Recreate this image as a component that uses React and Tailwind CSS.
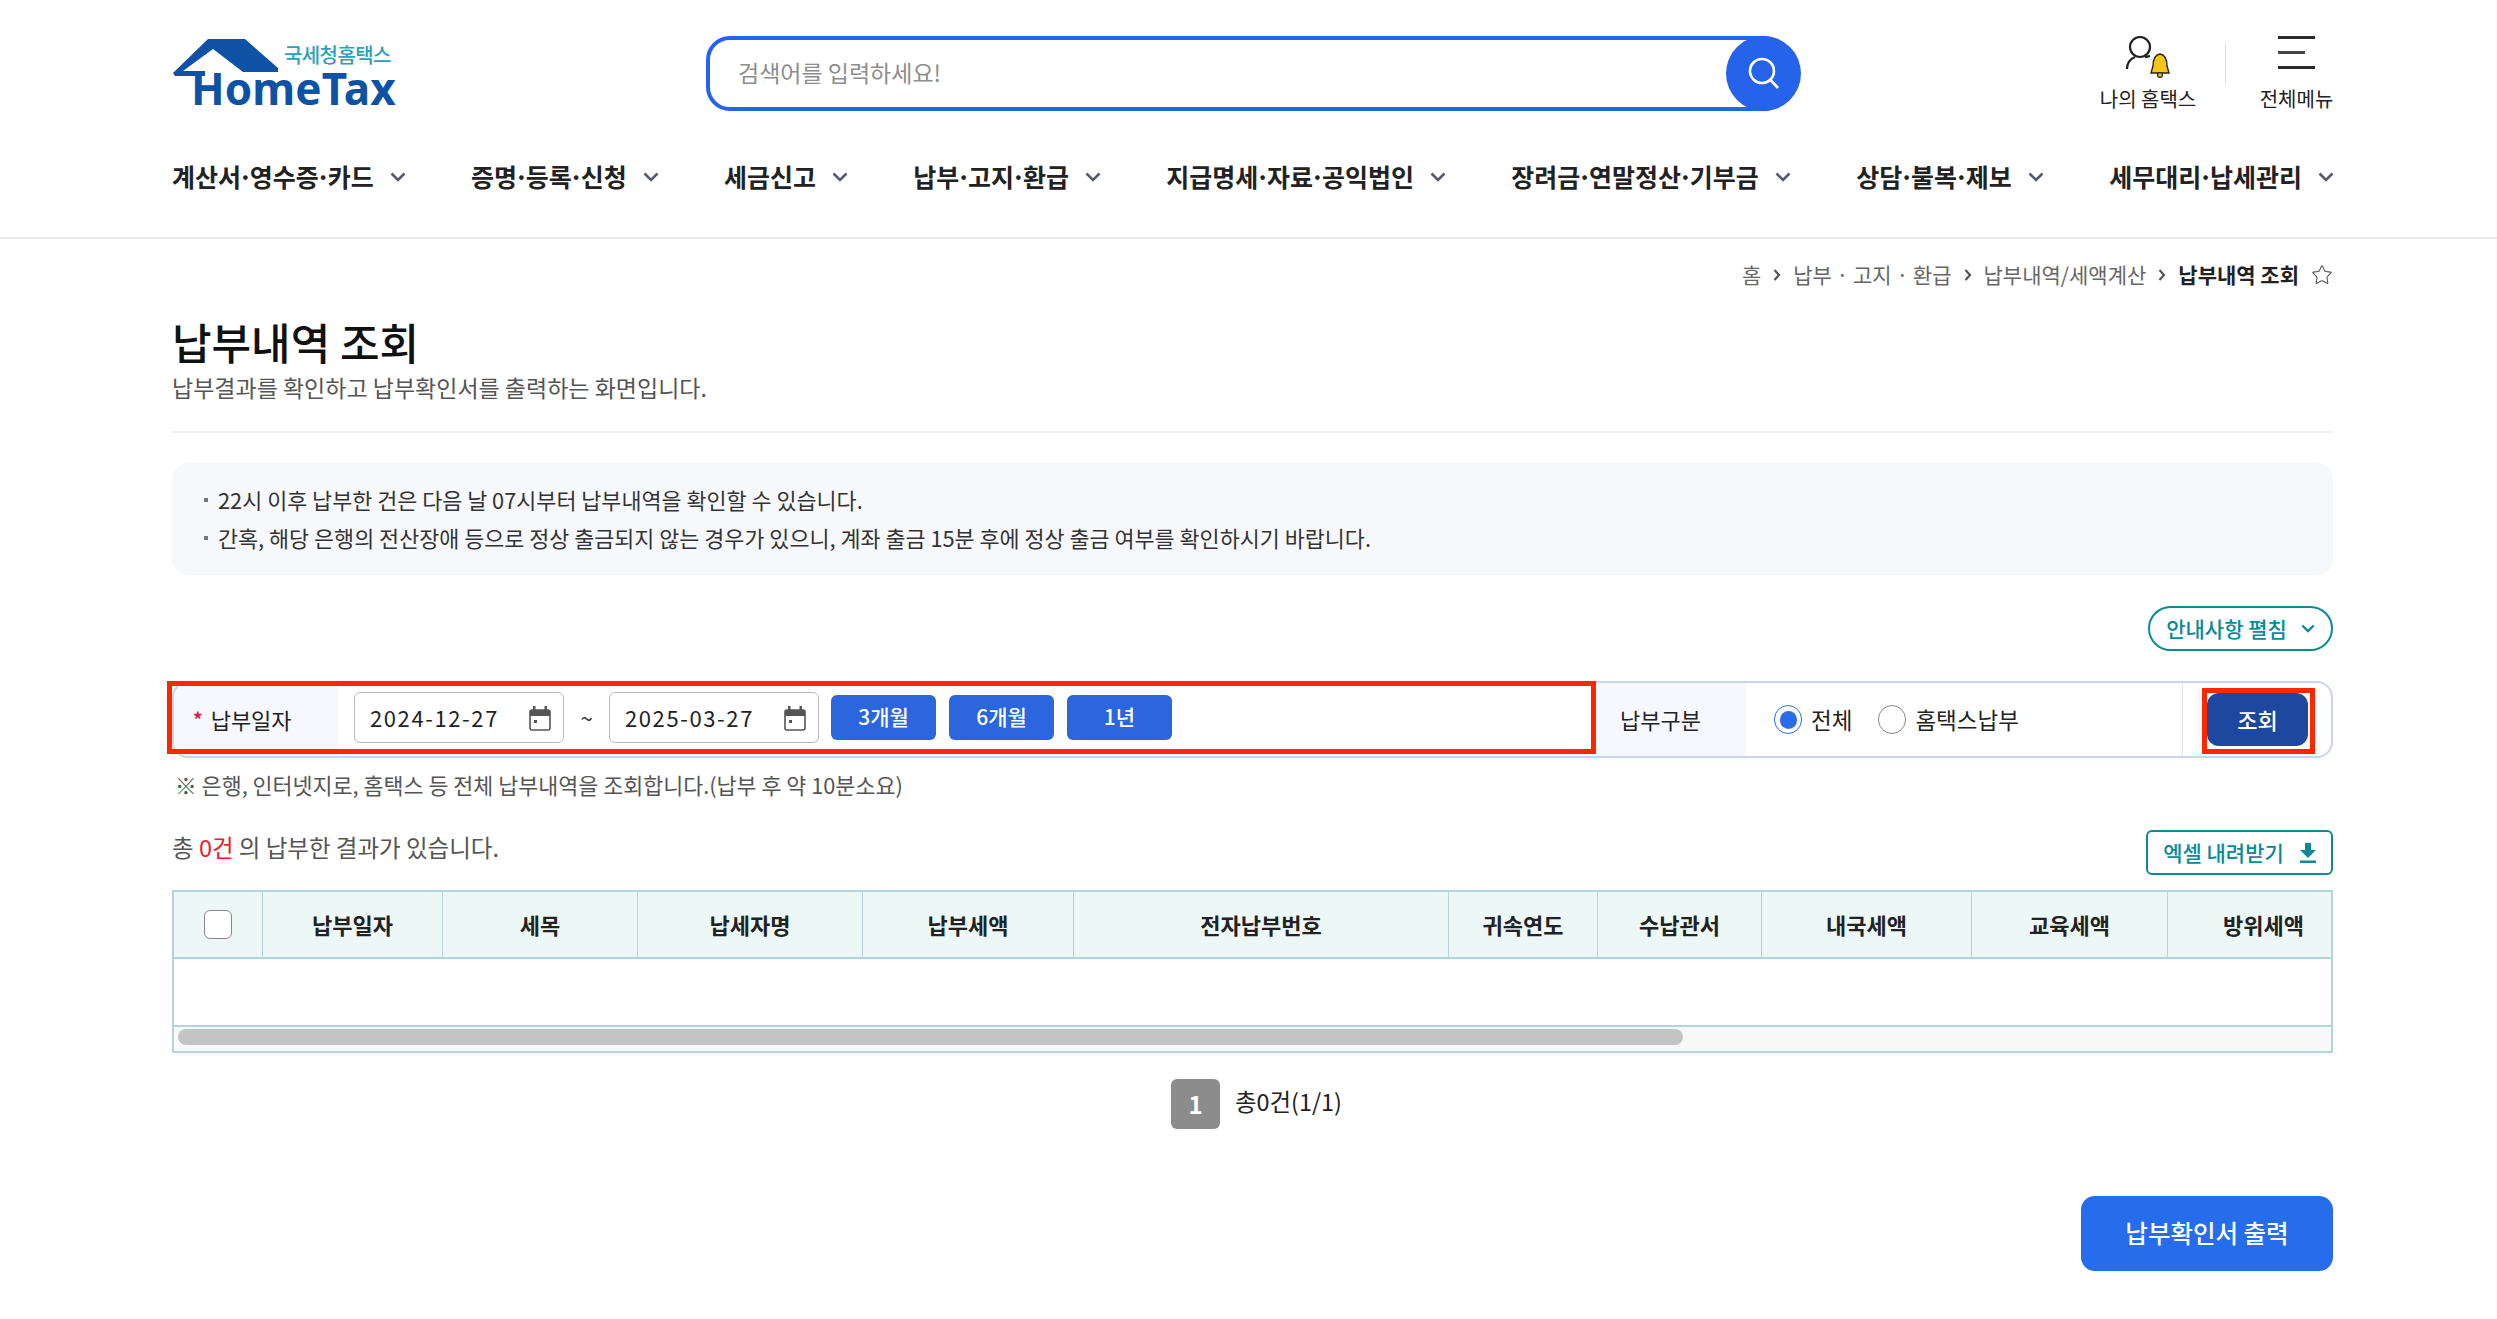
import React from 'react';
import { Star } from 'lucide-react';

const navItems = [
  "계산서·영수증·카드",
  "증명·등록·신청",
  "세금신고",
  "납부·고지·환급",
  "지급명세·자료·공익법인",
  "장려금·연말정산·기부금",
  "상담·불복·제보",
  "세무대리·납세관리",
];

const columns = [
  { name: "납부일자", width: "w-[180px]" },
  { name: "세목", width: "w-[195px]" },
  { name: "납세자명", width: "w-[225px]" },
  { name: "납부세액", width: "w-[211px]" },
  { name: "전자납부번호", width: "w-[375px]" },
  { name: "귀속연도", width: "w-[149px]" },
  { name: "수납관서", width: "w-[164px]" },
  { name: "내국세액", width: "w-[210px]" },
  { name: "교육세액", width: "w-[196px]" },
  { name: "방위세액", width: "w-[192px]" },
];

const Chevron = ({ className }) => (
  <svg viewBox="0 0 16 10" fill="none" className={className}>
    <polyline points="1.5,1.5 8,8 14.5,1.5" stroke="currentColor" strokeWidth="2.6" />
  </svg>
);

const CrumbArrow = () => (
  <svg viewBox="0 0 8 12" fill="none" className="w-[8px] h-[12px]">
    <polyline points="1.5,1 6,6 1.5,11" stroke="#555" strokeWidth="2.2" />
  </svg>
);

const CalendarIcon = () => (
  <svg viewBox="0 0 22 25" className="w-[22px] h-[25px] absolute right-[12px] top-[13px]">
    <rect x="1" y="4" width="20" height="20" rx="2" fill="none" stroke="#555" strokeWidth="1.6" />
    <rect x="1" y="4" width="20" height="6" fill="#555" />
    <rect x="4" y="0" width="2.5" height="5" fill="#555" />
    <rect x="15.5" y="0" width="2.5" height="5" fill="#555" />
    <rect x="5" y="14" width="3" height="3" fill="#555" />
  </svg>
);

const Logo = () => (
  <div className="relative w-[224px] h-[72px]">
    <svg viewBox="0 0 224 72" className="absolute left-0 top-0 w-[224px] h-[72px]">
      <polygon
        points="36,1 73,1 106,30 106,34 71,34 41,11 11,33 33,33 33,38 3,38 1,35"
        fill="#0d52a4"
      />
    </svg>
    <span className="absolute left-[112px] top-[6px] text-[20px] leading-[22px] font-medium tracking-[-0.6px] text-[#2a9fc0]">
      국세청홈택스
    </span>
    <span className="absolute left-[19px] top-[31px] text-[44px] leading-[38px] font-bold tracking-[0.1px] text-[#0d52a4] font-['Noto_Sans',sans-serif]">
      HomeTax
    </span>
  </div>
);

const UserBellIcon = () => (
  <svg viewBox="0 0 46 42" fill="none" className="w-[46px] h-[42px]">
    <circle cx="15" cy="11" r="10" stroke="#222" strokeWidth="2.2" />
    <path d="M2 33 C2 26 5 23 10 21" stroke="#222" strokeWidth="2.2" />
    <path d="M20 21 C22 21 24 20 25 20" stroke="#222" strokeWidth="2.2" />
    <path
      d="M35 18 C29 19 28 24 28 30 L26 37 L44 37 L42 30 C42 24 41 19 35 18 Z"
      fill="#f5c518"
      stroke="#222"
      strokeWidth="1.4"
    />
    <circle cx="35" cy="39" r="2.4" fill="#f5c518" stroke="#222" strokeWidth="1.2" />
  </svg>
);

const Radio = ({ checked, label }) => (
  <div className="flex items-center gap-[9px]">
    <div
      className={`w-[28px] h-[29px] rounded-full border flex items-center justify-center ${
        checked ? 'border-[#2b6de8]' : 'border-[#888]'
      }`}
    >
      {checked && <div className="w-[17px] h-[18px] rounded-full bg-[#2b6de8]" />}
    </div>
    <span className="text-[22.5px] text-[#222]">{label}</span>
  </div>
);

const NavLabel = ({ text }) => (
  <span className="text-[25px] font-semibold text-[#222]">
    {text.split("·").map((part, i) => (
      <React.Fragment key={part}>
        {i > 0 && <span className="-mx-[3px]">·</span>}
        {part}
      </React.Fragment>
    ))}
  </span>
);

const Header = () => (
  <header className="h-[239px] border-b-2 border-[#e8e8e8] pl-[172px] pr-[164px] pt-[36px]">
    <div className="flex items-center h-[75px]">
      <Logo />
      <div className="flex ml-[310px] w-[1095px] h-[75px]">
        <div className="flex-1 -mr-[62px] h-[75px] rounded-[24px] border-[4px] border-[#2563eb] pl-[28px] pb-[2px] flex items-center text-[23px] text-[#8d8d8d]">
          검색어를 입력하세요!
        </div>
        <button className="relative w-[75px] h-[75px] rounded-full bg-[#2563eb] flex items-center justify-center">
          <svg viewBox="0 0 36 36" fill="none" className="w-[36px] h-[36px]">
            <circle cx="16" cy="15" r="12" stroke="#fff" strokeWidth="2.6" />
            <line x1="24.5" y1="24" x2="32" y2="32" stroke="#fff" strokeWidth="2.6" />
          </svg>
        </button>
      </div>
      <div className="ml-auto flex items-center">
        <div className="flex flex-col items-center w-[98px]">
          <UserBellIcon />
          <span className="mt-[9px] text-[20px] leading-[24px] text-[#222] whitespace-nowrap">나의 홈택스</span>
        </div>
        <div className="w-px h-[41px] bg-[#ddd] ml-[28px] mr-[34px] -mt-[20px]" />
        <div className="flex flex-col items-center w-[73px]">
          <div className="w-[37px] h-[33px] flex flex-col justify-between mb-[18px]">
            <div className="h-[3px] bg-[#2a2a2a]" />
            <div className="h-[3px] w-[27px] bg-[#444]" />
            <div className="h-[3px] bg-[#2a2a2a]" />
          </div>
          <span className="text-[20px] leading-[24px] text-[#222] whitespace-nowrap">전체메뉴</span>
        </div>
      </div>
    </div>
    <nav className="flex justify-between mt-[48px] -mr-[1px] h-[36px] items-center">
      {navItems.map((item) => (
        <div key={item} className="flex items-center gap-[16px] whitespace-nowrap">
          <NavLabel text={item} />
          <Chevron className="w-[16px] h-[10px] text-[#555a6e]" />
        </div>
      ))}
    </nav>
  </header>
);

const Breadcrumb = () => (
  <div className="flex justify-end items-center h-[24px] mt-[24px] text-[21px] text-[#666] gap-[12px]">
    <span>홈</span>
    <CrumbArrow />
    <span>납부 · 고지 · 환급</span>
    <CrumbArrow />
    <span>납부내역/세액계산</span>
    <CrumbArrow />
    <span className="font-semibold text-[#222]">납부내역 조회</span>
    <Star className="w-[22px] h-[22px] text-[#555]" strokeWidth={1.2} />
  </div>
);

const SearchRow = () => (
  <div className="relative flex h-[77px] mt-[30px] rounded-[16px] border-2 border-[#c8d5ec]">
    <div className="absolute -left-[7px] -top-[2px] w-[1429px] h-[73px] border-[5px] border-[#ff2600] z-10" />
    <div className="w-[164px] bg-[#f7f8fd] flex items-center pl-[19px] rounded-l-[16px]">
      <span className="text-[#e4174d] text-[19px] mr-[8px] font-bold">*</span>
      <span className="text-[22px] text-[#222]">납부일자</span>
    </div>
    <div className="w-[1258px] flex items-center pl-[16px] pb-[5px]">
      <div className="relative w-[210px] h-[51px] border border-[#bbb] rounded-[6px] flex items-center pl-[15px] text-[22px] tracking-[1.6px] text-[#222]">
        2024-12-27
        <CalendarIcon />
      </div>
      <span className="w-[45px] text-center text-[22px] text-[#333]">~</span>
      <div className="relative w-[210px] h-[51px] border border-[#bbb] rounded-[6px] flex items-center pl-[15px] text-[22px] tracking-[1.6px] text-[#222]">
        2025-03-27
        <CalendarIcon />
      </div>
      <div className="flex gap-[13px] ml-[12px]">
        {["3개월", "6개월", "1년"].map((label) => (
          <button
            key={label}
            className="w-[105px] h-[45px] rounded-[6px] bg-[#2b66df] text-white text-[21px] font-medium"
          >
            {label}
          </button>
        ))}
      </div>
    </div>
    <div className="w-[150px] bg-[#f7f8fd] flex items-center pl-[24px] text-[22px] text-[#222]">납부구분</div>
    <div className="w-[437px] flex items-center gap-[26px] pl-[28px] border-r border-[#dce5f3]">
      <Radio checked label="전체" />
      <Radio label="홈택스납부" />
    </div>
    <div className="flex items-start pl-[24px] pt-[10px]">
      <div className="relative">
        <button className="w-[101px] h-[53px] rounded-[12px] bg-[#1e48a0] text-white text-[22px] font-medium">
          조회
        </button>
        <div className="absolute -left-[5px] -right-[7px] -top-[5px] -bottom-[8px] border-[5px] border-[#ff2600]" />
      </div>
    </div>
  </div>
);

const ResultTable = () => (
  <div className="mt-[15px] h-[163px] border-2 border-[#b3d4da] overflow-hidden">
    <div className="flex h-[67px] bg-[#edf7f6] border-b-2 border-[#b3d4da]">
      <div className="w-[89px] shrink-0 flex items-center justify-center border-r border-[#b3d4da]">
        <div className="w-[28px] h-[29px] rounded-[6px] border border-[#888] bg-white" />
      </div>
      {columns.map((col) => (
        <div
          key={col.name}
          className={`${col.width} shrink-0 flex items-center justify-center border-r border-[#b3d4da] text-[22px] font-semibold text-[#222]`}
        >
          {col.name}
        </div>
      ))}
    </div>
    <div className="h-[68px] border-b-2 border-[#b3d4da]" />
    <div className="h-[24px] bg-[#f9f9f9] pl-[4px] pt-[2px]">
      <div className="w-[1505px] h-[16px] rounded-full bg-[#c4c4c4]" />
    </div>
  </div>
);

const App = () => {
  return (
    <div className="min-h-screen bg-white font-['Noto_Sans_CJK_KR','Noto_Sans',sans-serif]">
      <Header />
      <main className="pl-[172px] pr-[164px]">
        <Breadcrumb />

        <h1 className="mt-[29px] text-[43px] leading-[50px] font-medium text-[#111]">납부내역 조회</h1>
        <p className="mt-[6px] text-[23px] leading-[30px] text-[#555]">
          납부결과를 확인하고 납부확인서를 출력하는 화면입니다.
        </p>
        <div className="mt-[29px] border-b-2 border-[#eeeeee]" />

        <div className="mt-[30px] h-[112px] rounded-[16px] bg-[#f7f8fc] pl-[32px] pt-[18px] text-[21.8px] leading-[38px] text-[#333]">
          <p className="flex items-center">
            <span className="w-[4px] h-[4px] bg-[#777] mr-[10px]" />
            22시 이후 납부한 건은 다음 날 07시부터 납부내역을 확인할 수 있습니다.
          </p>
          <p className="flex items-center">
            <span className="w-[4px] h-[4px] bg-[#777] mr-[10px]" />
            간혹, 해당 은행의 전산장애 등으로 정상 출금되지 않는 경우가 있으니, 계좌 출금 15분 후에 정상 출금 여부를 확인하시기 바랍니다.
          </p>
        </div>

        <div className="flex justify-end mt-[31px]">
          <button className="w-[185px] h-[45px] rounded-full border-2 border-[#0a8a96] text-[#0a8a96] text-[21px] font-medium flex items-center justify-center gap-[14px]">
            안내사항 펼침
            <Chevron className="w-[14px] h-[9px]" />
          </button>
        </div>

        <SearchRow />

        <p className="mt-[12px] pl-[3px] text-[21.75px] leading-[30px] text-[#555]">
          ※ 은행, 인터넷지로, 홈택스 등 전체 납부내역을 조회합니다.(납부 후 약 10분소요)
        </p>

        <div className="flex justify-between items-start mt-[30px] h-[45px]">
          <p className="text-[23.5px] leading-[34px] text-[#555]">
            총 <span className="text-[#e8212b]">0건</span> 의 납부한 결과가 있습니다.
          </p>
          <button className="w-[187px] h-[45px] rounded-[6px] border-2 border-[#0a8a96] text-[#0a8a96] text-[21px] font-medium flex items-center justify-center gap-[16px]">
            엑셀 내려받기
            <svg viewBox="0 0 16 20" className="w-[16px] h-[20px]">
              <polygon points="5,0 11,0 11,7 16,7 8,15 0,7 5,7" fill="#0a8a96" />
              <rect x="0" y="17.5" width="16" height="2.5" fill="#0a8a96" />
            </svg>
          </button>
        </div>

        <ResultTable />

        <div className="flex justify-center items-start gap-[15px] mt-[26px] pl-[8px]">
          <div className="w-[49px] h-[50px] rounded-[6px] bg-[#8c8c8c] text-white text-[24px] font-bold flex items-center justify-center">
            1
          </div>
          <span className="text-[23.4px] leading-[44px] text-[#222]">총0건(1/1)</span>
        </div>

        <div className="flex justify-end mt-[67px]">
          <button className="w-[252px] h-[75px] rounded-[14px] bg-[#266deb] text-white text-[24.5px] font-medium">
            납부확인서 출력
          </button>
        </div>
      </main>
    </div>
  );
};

export default App;
